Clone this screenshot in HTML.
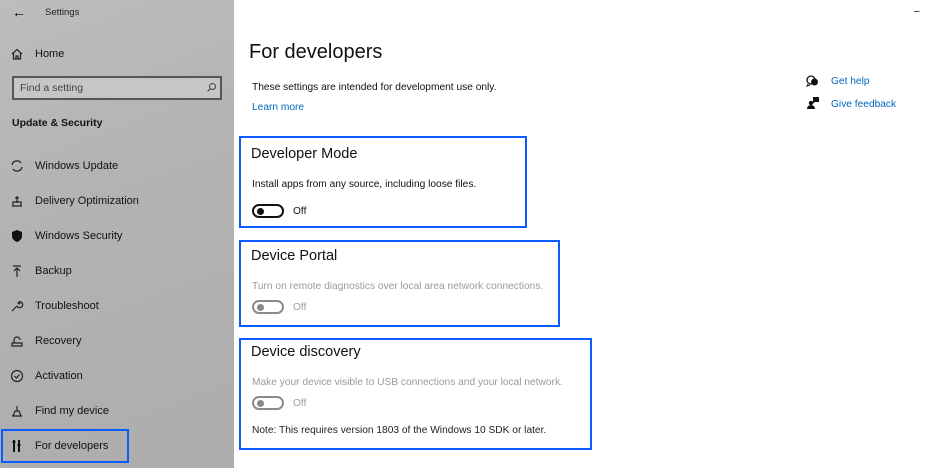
<!DOCTYPE html>
<html><head><meta charset="utf-8"><style>
*{margin:0;padding:0;box-sizing:border-box}
body{width:936px;height:468px;overflow:hidden;background:#fff;font-family:"Liberation Sans",sans-serif;position:relative;color:#000}
.side{position:absolute;left:0;top:0;width:234px;height:468px;background:linear-gradient(160deg,#bcbdbf 0%,#b3b3b3 40%,#adadad 100%)}
.t{position:absolute;white-space:nowrap}
.nav{position:absolute;left:35px;font-size:11px;color:#111}
.ic{position:absolute;left:10px;width:14px;height:14px}
.box{position:absolute;border:2px solid #0a5cff}
.h{font-size:14.5px;color:#111}
.s{font-size:10.2px;color:#111}
.g{color:#9a9a9a}
.tog{position:absolute;width:32px;height:14px;border:2px solid #111;border-radius:8px}
.tog i{position:absolute;left:3px;top:2px;width:7px;height:7px;border-radius:50%;background:#111}
.tog.d{border-color:#8a8a8a}.tog.d i{background:#8a8a8a}
.blue{color:#0067c0}
</style></head><body>
<div class="side">
<div class="t" style="left:12px;top:4px;font-size:14px">←</div>
<div class="t" style="left:45px;top:7px;font-size:9.5px;color:#222">Settings</div>
<svg class="ic" style="top:47px" viewBox="0 0 14 14"><path d="M2 7L7 2.5 12 7M3.5 6v6h7V6M6 12V9h2v3" fill="none" stroke="#222" stroke-width="1.2"/></svg>
<div class="nav" style="top:48px">Home</div>
<div style="position:absolute;left:12px;top:76px;width:210px;height:24px;border:2px solid #555;background:#c6c6c6"></div>
<div class="t" style="left:20px;top:82px;font-size:10.5px;color:#444">Find a setting</div>
<svg style="position:absolute;left:206px;top:82px" width="11" height="11" viewBox="0 0 11 11"><circle cx="6.5" cy="4.5" r="3" fill="none" stroke="#444"/><path d="M4.5 6.5L1.5 9.5" stroke="#444"/></svg>
<div class="t" style="left:12px;top:117px;font-size:10.5px;font-weight:bold;color:#111">Update &amp; Security</div>
<svg class="ic" style="top:159px" viewBox="0 0 14 14"><path d="M2 6A5 5 0 0 1 11 4M12 8A5 5 0 0 1 3 10" fill="none" stroke="#222" stroke-width="1.2"/></svg>
<div class="nav" style="top:160px">Windows Update</div>
<svg class="ic" style="top:194px" viewBox="0 0 14 14"><path d="M2 12h10M3 12V8h8v4M7 2v7M5 4h4" fill="none" stroke="#222" stroke-width="1.2"/></svg>
<div class="nav" style="top:195px">Delivery Optimization</div>
<svg class="ic" style="top:229px" viewBox="0 0 14 14"><path d="M7 1L12 3v4c0 3-2.5 5-5 6C4.5 12 2 10 2 7V3z" fill="#111"/></svg>
<div class="nav" style="top:230px">Windows Security</div>
<svg class="ic" style="top:264px" viewBox="0 0 14 14"><path d="M3 2h8M7 13V4M4 7l3-3 3 3" fill="none" stroke="#222" stroke-width="1.2"/></svg>
<div class="nav" style="top:265px">Backup</div>
<svg class="ic" style="top:299px" viewBox="0 0 14 14"><path d="M2 12l5-5M7 7a3 3 0 1 0 4-4l-2 2-1-1 2-2" fill="none" stroke="#222" stroke-width="1.2"/></svg>
<div class="nav" style="top:300px">Troubleshoot</div>
<svg class="ic" style="top:334px" viewBox="0 0 14 14"><path d="M2 12h10v-3H2zM4 9V6a3 3 0 0 1 6 0" fill="none" stroke="#222" stroke-width="1.2"/></svg>
<div class="nav" style="top:335px">Recovery</div>
<svg class="ic" style="top:369px" viewBox="0 0 14 14"><circle cx="7" cy="7" r="5.5" fill="none" stroke="#222" stroke-width="1.2"/><path d="M4.5 7l2 2 3-3.5" fill="none" stroke="#222" stroke-width="1.2"/></svg>
<div class="nav" style="top:370px">Activation</div>
<svg class="ic" style="top:404px" viewBox="0 0 14 14"><path d="M2 12h10M3 12l2-5h4l2 5M7 2v5" fill="none" stroke="#222" stroke-width="1.2"/></svg>
<div class="nav" style="top:405px">Find my device</div>
<div style="position:absolute;left:1px;top:429px;width:128px;height:34px;border:2px solid #0a5cff"></div>
<svg class="ic" style="top:439px" viewBox="0 0 14 14"><path d="M4 1v12M9 1v12M2.5 3h3M7.5 6h3" stroke="#111" stroke-width="2"/></svg>
<div class="nav" style="top:440px">For developers</div>
</div>
<div class="t" style="left:914px;top:6px;font-size:10px">–</div>
<div class="t" style="left:249px;top:41px;font-size:20px;color:#111">For developers</div>
<div class="t s" style="left:252px;top:82px">These settings are intended for development use only.</div>
<div class="t s blue" style="left:252px;top:102px">Learn more</div>
<svg style="position:absolute;left:806px;top:75px" width="13" height="12" viewBox="0 0 13 12"><circle cx="5" cy="5" r="4" fill="none" stroke="#111" stroke-width="1.3"/><circle cx="8.5" cy="7" r="3.5" fill="#111"/><path d="M2 9l-1 2 3-1" fill="none" stroke="#111"/></svg>
<div class="t s blue" style="left:831px;top:76px">Get help</div>
<svg style="position:absolute;left:807px;top:97px" width="12" height="12" viewBox="0 0 12 12"><circle cx="4" cy="6" r="2.2" fill="#111"/><path d="M0 12a4 4 0 0 1 8 0z M6 0h6v5H8L6 6.5z" fill="#111"/></svg>
<div class="t s blue" style="left:831px;top:99px">Give feedback</div>

<div class="box" style="left:239px;top:136px;width:288px;height:92px"></div>
<div class="t h" style="left:251px;top:146px">Developer Mode</div>
<div class="t s" style="left:252px;top:179px">Install apps from any source, including loose files.</div>
<div class="tog" style="left:252px;top:204px"><i></i></div>
<div class="t s" style="left:293px;top:206px">Off</div>

<div class="box" style="left:239px;top:240px;width:321px;height:87px"></div>
<div class="t h" style="left:251px;top:248px">Device Portal</div>
<div class="t s g" style="left:252px;top:281px">Turn on remote diagnostics over local area network connections.</div>
<div class="tog d" style="left:252px;top:300px"><i></i></div>
<div class="t s g" style="left:293px;top:302px">Off</div>

<div class="box" style="left:239px;top:338px;width:353px;height:112px"></div>
<div class="t h" style="left:251px;top:344px">Device discovery</div>
<div class="t s g" style="left:252px;top:377px">Make your device visible to USB connections and your local network.</div>
<div class="tog d" style="left:252px;top:396px"><i></i></div>
<div class="t s g" style="left:293px;top:398px">Off</div>
<div class="t s" style="left:252px;top:425px;color:#222">Note: This requires version 1803 of the Windows 10 SDK or later.</div>
</body></html>
